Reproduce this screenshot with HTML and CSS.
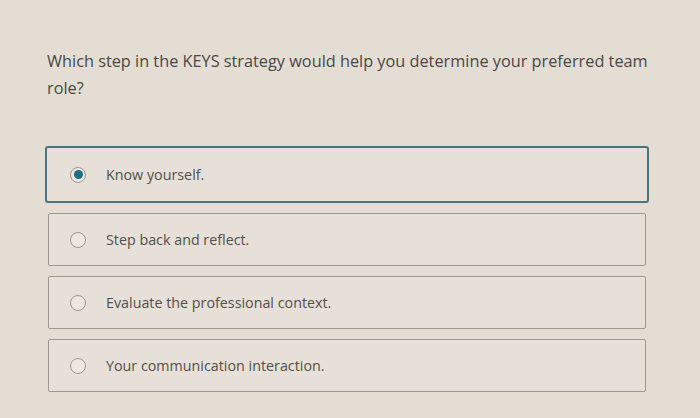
FILE: index.html
```html
<!DOCTYPE html>
<html>
<head>
<meta charset="utf-8">
<link rel="stylesheet" href="styles.css">
</head>
<body>
<div class="page">
  <p class="question">Which step in the KEYS strategy would help you determine your preferred team role?</p>
  <div class="options">
    <label class="option selected"><span class="radio"><span class="dot"></span></span><span class="label">Know yourself.</span></label>
    <label class="option"><span class="radio"></span><span class="label">Step back and reflect.</span></label>
    <label class="option"><span class="radio"></span><span class="label">Evaluate the professional context.</span></label>
    <label class="option"><span class="radio"></span><span class="label">Your communication interaction.</span></label>
  </div>
</div>
</body>
</html>
```
FILE: styles.css
```css
html, body {
  margin: 0;
  padding: 0;
  background: #e4ddd4;
}
.page {
  width: 700px;
  height: 418px;
  box-sizing: border-box;
  padding: 48px 0 0 47px;
  font-family: "Open Sans", sans-serif;
  color: #4a4846;
}
.question {
  margin: 0;
  width: 620px;
  font-size: 16.3px;
  line-height: 27px;
}
.options {
  margin-top: 44px;
  margin-left: -2px;
  width: 604px;
  display: flex;
  flex-direction: column;
  gap: 10px;
}
.option {
  display: flex;
  align-items: center;
  height: 53px;
  box-sizing: border-box;
  border: 1px solid #9d9893;
  border-radius: 2px;
  background: #e6e0d8;
  margin: 0 3px;
  padding-left: 21px;
  font-size: 14.3px;
  color: #52504d;
}
.option.selected {
  height: 57px;
  margin: 0;
  border: 2px solid #4b7480;
  border-radius: 3px;
  padding-left: 23px;
}
.radio {
  flex: none;
  width: 16px;
  height: 16px;
  box-sizing: border-box;
  border: 1px solid #9a9691;
  border-radius: 50%;
  background: #ece7e0;
  display: flex;
  align-items: center;
  justify-content: center;
  margin-right: 20px;
}
.dot {
  width: 9px;
  height: 9px;
  border-radius: 50%;
  background: #1d6f88;
}
```
